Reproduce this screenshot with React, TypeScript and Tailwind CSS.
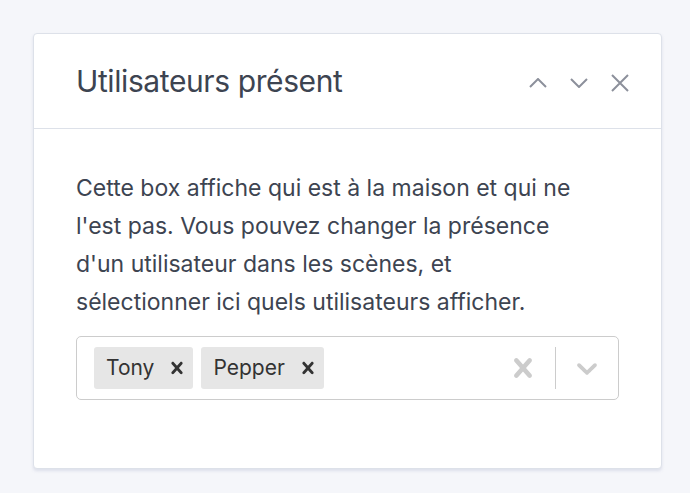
import React from 'react';

const crossPath =
  'M14.348 14.849c-0.469 0.469-1.229 0.469-1.697 0l-2.651-3.030-2.651 3.029c-0.469 0.469-1.229 0.469-1.697 0-0.469-0.469-0.469-1.229 0-1.697l2.758-3.15-2.759-3.152c-0.469-0.469-0.469-1.228 0-1.697s1.228-0.469 1.697 0l2.652 3.031 2.651-3.031c0.469-0.469 1.228-0.469 1.697 0s0.469 1.229 0 1.697l-2.758 3.152 2.758 3.15c0.469 0.469 0.469 1.229 0 1.698z';
const chevronPath =
  'M4.516 7.548c0.436-0.446 1.043-0.481 1.576 0l3.908 3.747 3.908-3.747c0.533-0.481 1.141-0.446 1.574 0 0.436 0.445 0.408 1.197 0 1.615-0.406 0.418-4.695 4.502-4.695 4.502-0.217 0.223-0.502 0.335-0.787 0.335s-0.57-0.112-0.789-0.335c0 0-4.287-4.084-4.695-4.502s-0.436-1.17 0-1.615z';

function Chip({ label }: { label: string }) {
  return (
    <div className="flex h-[42px] items-center rounded-[3px] bg-[#e6e6e6]">
      <span className="pl-3 pr-[7px] text-[21px] text-[#333]">{label}</span>
      <span className="flex h-full w-[32px] items-center justify-center">
        <svg viewBox="0 0 20 20" className="h-6 w-6 fill-[#333]">
          <path d={crossPath} />
        </svg>
      </span>
    </div>
  );
}

export default function App() {
  const users = ['Tony', 'Pepper'];

  return (
    <div className="min-h-[493px] bg-[#f5f6fa] pt-[33px] pl-[33px] font-['Inter',sans-serif]">
      <div className="h-[436px] w-[629px] rounded-[4px] border border-[#dde1e9] bg-white shadow-[0_2px_3px_rgba(150,160,190,0.25)]">
        {/* header */}
        <div className="flex h-[95px] items-center border-b border-[#dde1e9] pl-[42px] pr-[32px]">
          <h3 className="flex-1 text-[30px] font-normal tracking-[-0.4px] text-[#3d4451]">Utilisateurs présent</h3>
          <div className="flex items-center gap-[23px] pt-[4px] text-[#8c909b]">
            <svg viewBox="0 0 18 10" className="h-[10px] w-[18px]" fill="none" stroke="currentColor" strokeWidth="2">
              <path d="M1 9l8-8 8 8" />
            </svg>
            <svg viewBox="0 0 18 10" className="h-[10px] w-[18px]" fill="none" stroke="currentColor" strokeWidth="2">
              <path d="M1 1l8 8 8-8" />
            </svg>
            <svg viewBox="0 0 18 18" className="h-[18px] w-[18px]" fill="none" stroke="currentColor" strokeWidth="2">
              <path d="M1 1l16 16M17 1L1 17" />
            </svg>
          </div>
        </div>
        {/* body */}
        <div className="px-[42px] pt-[40px]">
          <p className="max-w-[508px] text-[23px] leading-[38px] text-[#3d4451]">
            Cette box affiche qui est à la maison et qui ne l'est pas. Vous pouvez changer la présence d'un utilisateur dans les scènes, et sélectionner ici quels utilisateurs afficher.
          </p>
          <div className="mt-[15px] flex h-[64px] w-[543px] items-center rounded-[5px] border border-[#cccccc] bg-white">
            <div className="flex flex-1 items-center gap-2 pl-[17px]">
              {users.map((u) => (
                <Chip key={u} label={u} />
              ))}
            </div>
            <div className="flex h-full items-center">
              <span className="flex items-center px-[13px]">
                <svg viewBox="0 0 20 20" className="h-[38px] w-[38px] fill-[#cccccc]">
                  <path d={crossPath} />
                </svg>
              </span>
              <span className="h-[42px] w-px bg-[#cccccc]" />
              <span className="flex items-center px-[14px]">
                <svg viewBox="0 0 20 20" className="h-[34px] w-[34px] fill-[#cccccc]">
                  <path d={chevronPath} />
                </svg>
              </span>
            </div>
          </div>
        </div>
      </div>
    </div>
  );
}
